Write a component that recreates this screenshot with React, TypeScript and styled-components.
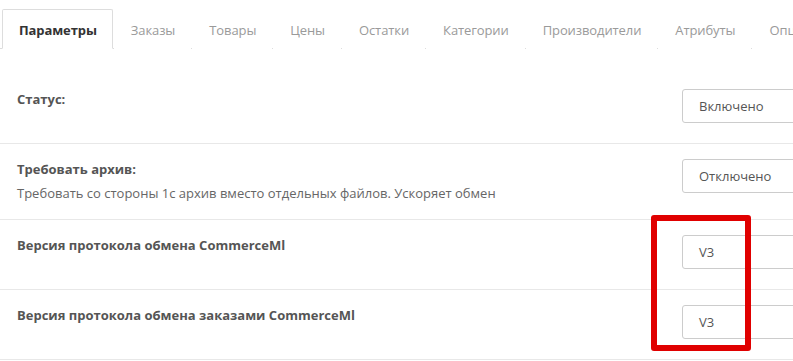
import React from 'react'
import styled, { createGlobalStyle } from 'styled-components'

const GlobalStyle = createGlobalStyle`
  html, body {
    margin: 0;
    padding: 0;
    background: #fff;
    overflow: hidden;
  }
  body {
    font-family: "Open Sans", "Liberation Sans", sans-serif;
    font-size: 13px;
    color: #555;
  }
`

const Page = styled.div`
  position: relative;
  width: 793px;
  height: 361px;
  overflow: hidden;
`

const TabBar = styled.ul`
  display: flex;
  margin: 0;
  padding: 9px 0 0 2px;
  list-style: none;
  border-bottom: 1px solid #ddd;
  white-space: nowrap;
`

const Tab = styled.li<{ $active?: boolean }>`
  flex: none;
  height: 38px;
  line-height: 40px;
  padding: 0 15px 0 16px;
  margin-right: 1px;
  margin-bottom: -1px;
  border: 1px solid ${p => (p.$active ? '#ddd' : 'transparent')};
  border-bottom-color: ${p => (p.$active ? '#fff' : 'transparent')};
  border-radius: 2px 2px 0 0;
  background: #fff;
  color: ${p => (p.$active ? '#333' : '#9a9a9a')};
  font-weight: ${p => (p.$active ? 700 : 400)};
  letter-spacing: -0.1px;
  cursor: pointer;
`

const Form = styled.div`
  padding-top: 25px;
`

const Row = styled.div`
  display: grid;
  grid-template-columns: 665px 1fr;
  padding: 15px 0 15px 17px;
  border-bottom: 1px solid #e8e8e8;
`

const LabelCol = styled.div`
  display: flex;
  flex-direction: column;
`

const Label = styled.div`
  font-weight: 700;
  line-height: 20px;
  color: #555;
`

const Help = styled.div`
  margin-top: 3px;
  line-height: 22px;
  color: #666;
`

const Select = styled.div`
  box-sizing: border-box;
  width: 240px;
  height: 34px;
  margin-bottom: 5px;
  padding: 0 16px;
  line-height: 32px;
  border: 1px solid #ccc;
  border-radius: 3px;
  color: #555;
  background: #fff;
`

const Highlight = styled.div`
  position: absolute;
  left: 651px;
  top: 215px;
  width: 100px;
  height: 136px;
  box-sizing: border-box;
  border: 6px solid #e00000;
  border-radius: 3px;
  pointer-events: none;
`

const tabs = ['Параметры', 'Заказы', 'Товары', 'Цены', 'Остатки', 'Категории', 'Производители', 'Атрибуты', 'Опции']

const settings = [
  { label: 'Статус:', value: 'Включено' },
  { label: 'Требовать архив:', help: 'Требовать со стороны 1с архив вместо отдельных файлов. Ускоряет обмен', value: 'Отключено' },
  { label: 'Версия протокола обмена CommerceMl', value: 'V3' },
  { label: 'Версия протокола обмена заказами CommerceMl', value: 'V3' },
]

const App: React.FC = () => {
  return (
    <Page>
      <GlobalStyle />
      <TabBar>
        {tabs.map((t, i) => (
          <Tab key={t} $active={i === 0}>{t}</Tab>
        ))}
      </TabBar>
      <Form>
        {settings.map(s => (
          <Row key={s.label}>
            <LabelCol>
              <Label>{s.label}</Label>
              {s.help && <Help>{s.help}</Help>}
            </LabelCol>
            <div>
              <Select>{s.value}</Select>
            </div>
          </Row>
        ))}
      </Form>
      <Highlight />
    </Page>
  )
}

export default App
